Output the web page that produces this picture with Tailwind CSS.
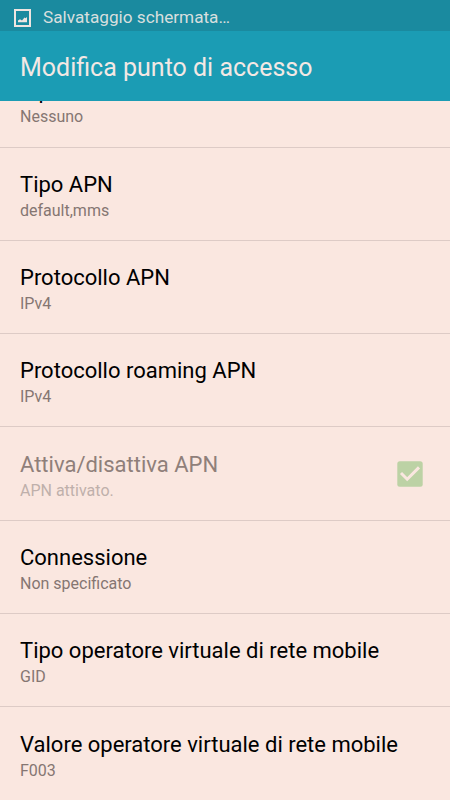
<!DOCTYPE html>
<html lang="it">

<head>
    <meta charset="UTF-8">
    <meta name="viewport" content="width=device-width, initial-scale=1.0">
    <title>Modifica punto di accesso</title>
    <script src="https://cdn.jsdelivr.net/npm/@tailwindcss/browser@4"></script>
</head>

<body class="bg-[#fae7e0] font-[Roboto,sans-serif] h-[800px] overflow-hidden flex flex-col">
    <!-- Status bar -->
    <div class="h-[31px] shrink-0 bg-[#1a8a9f] flex items-center pl-3.5 pt-[3px] gap-3">
        <svg class="w-[17px] h-[18px] mt-px" viewBox="0 0 17 18">
            <path d="M1 1h15v16H1z" fill="none" stroke="#eee5e1" stroke-width="2" />
            <path d="M4 13.2v-1.7l2-1.3 2 1.3 2.5-3 1 .8L13 8v5.2z" fill="#eee5e1" />
        </svg>
        <span class="text-[17.2px] leading-5 text-[#d8dfde]">Salvataggio schermata…</span>
    </div>

    <!-- Action bar -->
    <div class="h-[70px] shrink-0 bg-[#1b9cb4] flex items-center px-5 pt-1">
        <h1 class="text-[25px] leading-8 text-[#f3e8e4]">Modifica punto di accesso</h1>
    </div>

    <!-- Settings list, scrolled so the first title is cut off -->
    <div class="flex-1 min-h-0 overflow-hidden text-[#857672]">
        <div class="h-[46.6px] flex flex-col justify-end overflow-hidden border-b border-[#ddcbc6]">
            <div class="h-[93.3px] shrink-0 px-5 pt-[23.5px]">
                <div class="text-[22px] leading-7 text-black">Tipo autenticazione</div>
                <div class="text-[16px] leading-6">Nessuno</div>
            </div>
        </div>
        <div class="h-[93.3px] px-5 pt-[23.3px] border-b border-[#ddcbc6]">
            <div class="text-[22px] leading-7 text-black">Tipo APN</div>
            <div class="text-[16px] leading-6">default,mms</div>
        </div>
        <div class="h-[93.3px] px-5 pt-[23.3px] border-b border-[#ddcbc6]">
            <div class="text-[22px] leading-7 text-black">Protocollo APN</div>
            <div class="text-[16px] leading-6">IPv4</div>
        </div>
        <div class="h-[93.3px] px-5 pt-[23.3px] border-b border-[#ddcbc6]">
            <div class="text-[22px] leading-7 text-black">Protocollo roaming APN</div>
            <div class="text-[16px] leading-6">IPv4</div>
        </div>
        <!-- Disabled row -->
        <div class="h-[93.3px] px-5 border-b border-[#ddcbc6] flex justify-between">
            <div class="pt-[23.3px]">
                <div class="text-[22px] leading-7 text-[#8f7f7a]">Attiva/disattiva APN</div>
                <div class="text-[16px] leading-6 text-[#bfb0ab]">APN attivato.</div>
            </div>
            <svg class="w-[26px] h-[26px] mt-[33.6px] mr-[7px]" viewBox="0 0 26 26">
                <rect x=".3" y=".3" width="25.4" height="25.4" rx="2.5" fill="#bcd2a5" />
                <path d="M4 12l6.2 6.2L22 6.4" fill="none" stroke="#fae7e0" stroke-width="3" />
            </svg>
        </div>
        <div class="h-[93.3px] px-5 pt-[23.3px] border-b border-[#ddcbc6]">
            <div class="text-[22px] leading-7 text-black">Connessione</div>
            <div class="text-[16px] leading-6">Non specificato</div>
        </div>
        <div class="h-[93.3px] px-5 pt-[23.3px] border-b border-[#ddcbc6]">
            <div class="text-[22px] leading-7 text-black">Tipo operatore virtuale di rete mobile</div>
            <div class="text-[16px] leading-6">GID</div>
        </div>
        <div class="h-[93.3px] px-5 pt-[23.3px]">
            <div class="text-[22px] leading-7 text-black">Valore operatore virtuale di rete mobile</div>
            <div class="text-[16px] leading-6">F003</div>
        </div>
    </div>
</body>

</html>
